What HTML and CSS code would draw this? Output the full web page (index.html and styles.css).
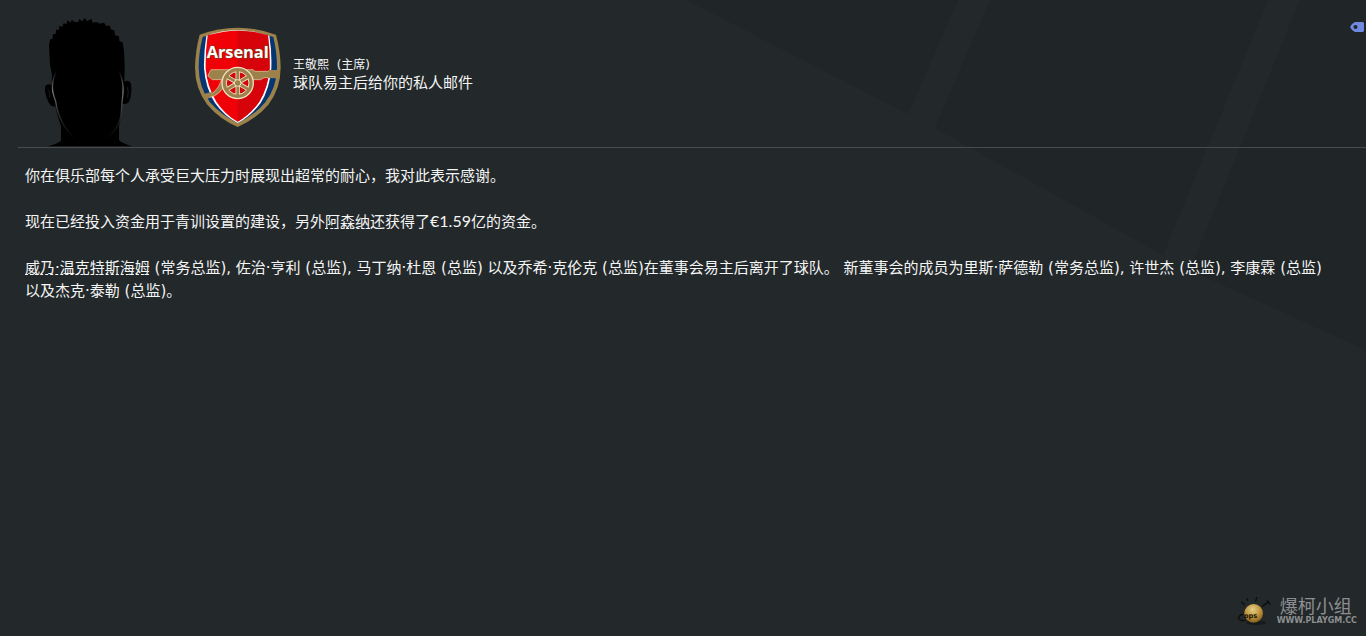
FILE: index.html
```html
<!DOCTYPE html>
<html lang="zh-CN">
<head>
  <meta charset="UTF-8">
  <title>球队易主后给你的私人邮件</title>
  <link rel="stylesheet" href="styles.css">
</head>
<body>

<svg class="backdrop" viewBox="0 0 1366 636" preserveAspectRatio="none" aria-hidden="true">
  <path fill="#202527" d="M687 0H958L908 114Z M990 0H1268L1163 255L935 128Z M1300 0H1366V350L1190 270Z"/>
</svg>

<header class="mail-header">
  <svg class="portrait" viewBox="42 24 264 386" aria-hidden="true">
    <defs>
      <linearGradient id="rim" x1="0" y1="0" x2="0" y2="1">
        <stop offset="0" stop-color="#777" stop-opacity="0"/>
        <stop offset=".3" stop-color="#777"/>
        <stop offset="1" stop-color="#444" stop-opacity="0"/>
      </linearGradient>
    </defs>
    <path d="M57 105L61 88L67 89L69 74L77 73L78 60L87 60L88 49L97 51L101 41L110 43L112 32L121 39L126 30L134 38L146 36L148 27L156 35L165 25L171 35L184 27L188 39L200 37L209 42L222 39L228 48L240 48L242 59L253 62L255 77L267 80L268 94L278 98L282 125L284 170L283 216Q297 208 303 222Q306 240 302 262Q298 282 288 282L277 283Q276 322 267 348V392Q275 400 306 410H54Q82 402 93 393V350Q82 320 76 290Q62 294 54 274Q42 250 46 230Q52 220 65 226L66 195L60 165Z"/>
    <path d="M80 182Q64 215 68 245Q72 262 77 275Q86 342 137 390" fill="none" stroke="url(#rim)" stroke-width="4"/>
    <path d="M266 182Q282 215 279 250Q276 275 274 305Q271 360 222 389" fill="none" stroke="url(#rim)" stroke-width="4"/>
    <path d="M52 238Q62 246 58 262M292 232Q298 248 292 264" fill="none" stroke="#1c1c1c" stroke-width="3"/>
  </svg>

  <svg class="crest" viewBox="30 34 258 300" role="img" aria-label="Arsenal">
    <path fill="#9c824a" d="M44 57Q158 15 273 57Q286 105 287 155Q287 220 250 267Q213 310 158 334Q104 310 67 267Q30 220 30 155Q31 105 44 57Z"/>
    <path fill="#063672" d="M53 64Q158 26 265 64Q276 110 276 155Q276 214 241 260Q208 299 158 322Q109 299 75 260Q41 214 41 155Q41 110 53 64Z"/>
    <path fill="#fff" d="M64 60Q158 28 253 60Q261 110 259 158Q254 220 227 262Q197 302 158 322Q118 302 90 262Q62 220 57 158Q56 110 64 60Z"/>
    <path fill="#ef0107" d="M68 59Q158 31 249 59Q255 110 254 158Q249 216 223 258Q195 298 158 318Q121 298 94 258Q67 216 62 158Q61 110 68 59Z"/>
    <path fill="#c8040d" d="M158 45Q206 45 249 59Q255 110 254 158Q249 216 223 258Q195 298 158 318Z" opacity=".65"/>
    <text class="crest-name" x="158" y="126" text-anchor="middle">Arsenal</text>
    <path fill="#9c824a" stroke="#e7d3b0" stroke-width="2" d="M78 162H204L210 167H276V186H237L227 192H203L180 213L118 209Q104 238 78 244L64 247L87 229Q102 216 110 192H82L69 181L73 171Z"/>
    <path fill="#9c824a" d="M250 163H284V187H250Z"/>
    <path fill="#9c824a" d="M52 236L84 228L72 248L58 250Z"/>
    <circle cx="158" cy="202" r="47" fill="#9c824a" stroke="#efdfc2" stroke-width="4"/>
    <circle cx="158" cy="202" r="34" fill="#d3040b" stroke="#efdfc2" stroke-width="3"/>
    <g stroke="#efdfc2" stroke-width="13">
      <path d="M158 168V236M129 185L187 219M129 219L187 185"/>
    </g>
    <g stroke="#9c824a" stroke-width="8">
      <path d="M158 165V239M126 183L190 221M126 221L190 183"/>
    </g>
    <circle cx="158" cy="202" r="10" fill="#9c824a" stroke="#efdfc2" stroke-width="3"/>
  </svg>

  <div class="mail-title">
    <p class="sender">王敬熙&nbsp; (主席)</p>
    <h1 class="subject">球队易主后给你的私人邮件</h1>
  </div>

  <button class="tag" type="button" aria-label="标签">
    <svg viewBox="0 0 14 10">
      <path fill="#6f88e0" fill-rule="evenodd" d="M5 0H13L14 1V9L13 10H5L2 8L0 5L2 2ZM5.500 3A2 2 0 1 0 5.500 7A2 2 0 1 0 5.500 3Z"/>
    </svg>
  </button>
</header>

<main class="mail-body">
  <p>你在俱乐部每个人承受巨大压力时展现出超常的耐心，我对此表示感谢。</p>
  <p>现在已经投入资金用于青训设置的建设，另外<a href="#">阿森纳</a>还获得了<span class="amount">€1.59</span>亿的资金。</p>
  <p><a href="#">威乃·温克特斯海姆</a> (常务总监), 佐治·亨利 (总监), 马丁纳·杜恩 (总监) 以及乔希·克伦克 (总监)在董事会易主后离开了球队。 新董事会的成员为里斯·萨德勒 (常务总监), 许世杰 (总监), 李康霖 (总监) 以及杰克·泰勒 (总监)。</p>
</main>

<footer class="watermark">
  <svg class="watermark-logo" viewBox="0 0 108 96" aria-hidden="true">
    <defs>
      <radialGradient id="ball" cx=".45" cy=".3" r=".7">
        <stop offset="0" stop-color="#e0d08c"/>
        <stop offset=".55" stop-color="#c4963c"/>
        <stop offset="1" stop-color="#85601f"/>
      </radialGradient>
    </defs>
    <ellipse cx="60" cy="80" rx="30" ry="7" fill="#171b1c"/>
    <path d="M16 17L26 27M63 3L58 17M32 8L36 14M78 31L100 17M92 13L103 26M22 54Q4 60 8 68Q14 78 30 72" fill="none" stroke="#0c0e0e" stroke-width="4"/>
    <circle cx="53" cy="52" r="28" fill="url(#ball)"/>
    <text class="ball-text" x="24" y="66">ops</text>
  </svg>
  <div class="watermark-text">
    <span class="watermark-name">爆柯小组</span>
    <span class="watermark-site">WWW.PLAYGM.CC</span>
  </div>
</footer>

</body>
</html>
```

FILE: styles.css
```css
* {
  box-sizing: border-box;
}

body {
  display: flex;
  flex-direction: column;
  min-height: 100vh;
  margin: 0;
  background-color: #23282a;
  color: #f4f5f5;
  font-family: "DejaVu Sans", "Noto Sans CJK SC", sans-serif;
  font-size: 15px;
  line-height: 23px;
}

p, h1 {
  margin: 0;
}

/* faint diagonal panels behind the mail */
.backdrop {
  position: absolute;
  top: 0;
  left: 0;
  width: 100%;
  height: 100%;
  z-index: -1;
}

.mail-header {
  display: flex;
  align-items: flex-start;
  margin-left: 18px;
  padding: 17px 2px 0 26px;
  border-bottom: 1px solid #484c4e;
}

.portrait {
  width: 88px;
  height: 130px;
}

.crest {
  width: 86px;
  height: 100px;
  margin: 10px 12px 0 63px;
}

.crest-name {
  fill: #fff;
  stroke: #6b4a20;
  stroke-width: 3px;
  paint-order: stroke;
  font-family: "Open Sans", sans-serif;
  font-size: 49px;
  font-weight: 700;
}

.mail-title {
  flex: 1;
  padding-top: 39px;
}

.sender {
  font-size: 12px;
  line-height: 18px;
}

.subject {
  font-size: 15px;
  font-weight: normal;
  line-height: 18px;
}

.tag {
  margin-top: 5px;
  padding: 0;
  border: none;
  background: none;
  cursor: pointer;
}

.tag svg {
  display: block;
  width: 14px;
  height: 10px;
}

.mail-body {
  flex: 1;
  display: flex;
  flex-direction: column;
  gap: 23px;
  padding: 17px 40px 16px 25px;
}

.mail-body a {
  color: inherit;
  text-decoration: underline dashed 1px;
  text-underline-offset: 1px;
}

.amount {
  font-family: Lato, sans-serif;
  font-size: 16px;
  line-height: 16px;
}

.watermark {
  display: flex;
  justify-content: flex-end;
  align-items: center;
  gap: 5px;
  padding: 0 9px 8px 0;
  color: #8c8f90;
}

.watermark-logo {
  width: 36px;
  height: 32px;
}

.ball-text {
  fill: #17130a;
  font-family: "DejaVu Sans", sans-serif;
  font-size: 20px;
  font-weight: bold;
}

.watermark-text {
  display: flex;
  flex-direction: column;
}

.watermark-name {
  padding-left: 3px;
  font-size: 18px;
  line-height: 18px;
}

.watermark-site {
  font-family: "DejaVu Sans", sans-serif;
  font-size: 8px;
  font-weight: bold;
  line-height: 10px;
}
```
